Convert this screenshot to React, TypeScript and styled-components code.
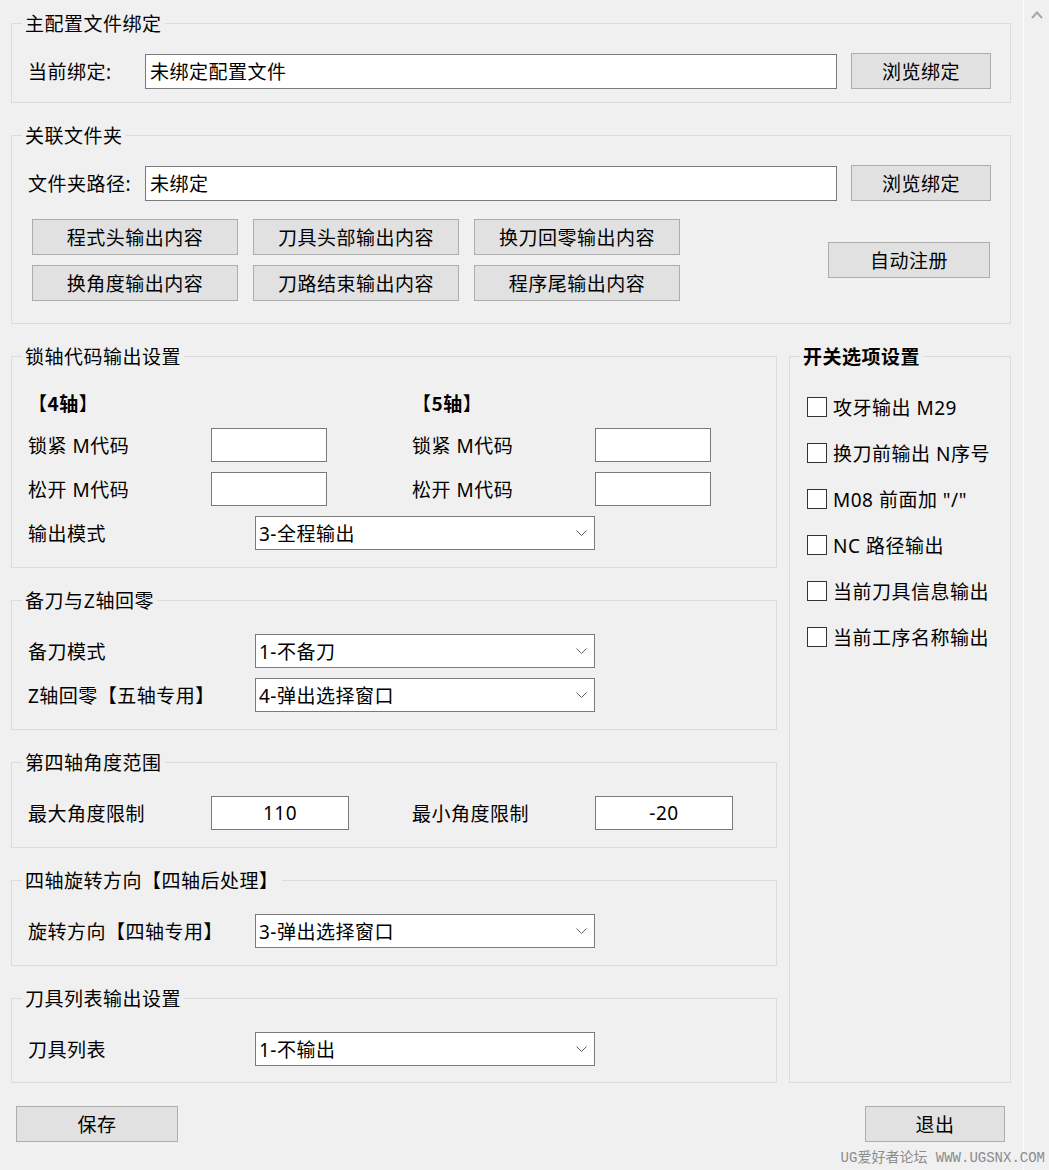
import styled, { createGlobalStyle } from "styled-components";

const GlobalStyle = createGlobalStyle`
  html, body {
    margin: 0;
    padding: 0;
    background: #f0f0f0;
  }
  body {
    font-family: "Noto Sans", "Noto Sans CJK SC", sans-serif;
    font-size: 19px;
    letter-spacing: 0.5px;
    color: #000;
  }
  * {
    box-sizing: border-box;
  }
`;

const lockRows = [
  { label: "锁紧 M代码" },
  { label: "松开 M代码" },
];

const switches = [
  "攻牙输出 M29",
  "换刀前输出 N序号",
  'M08 前面加 "/"',
  "NC 路径输出",
  "当前刀具信息输出",
  "当前工序名称输出",
];

const outputButtons = [
  "程式头输出内容",
  "刀具头部输出内容",
  "换刀回零输出内容",
  "换角度输出内容",
  "刀路结束输出内容",
  "程序尾输出内容",
];

const ChevronDown = () => (
  <svg width="11" height="6" viewBox="0 0 11 6">
    <polyline points="0.5,0.5 5.5,5.5 10.5,0.5" fill="none" stroke="#606060" strokeWidth="1" />
  </svg>
);

const ChevronUp = () => (
  <svg width="12" height="9" viewBox="0 0 12 9">
    <polyline points="1,8 6,2.5 11,8" fill="none" stroke="#a6a6a6" strokeWidth="2" />
  </svg>
);

const ComboBox = ({ value }: { value: string }) => (
  <Select>
    <span>{value}</span>
    <ChevronDown />
  </Select>
);

const App = () => {
  return (
    <Page>
      <GlobalStyle />
      <Main>
        <Group $pt={18} $pb={13}>
          <Legend>主配置文件绑定</Legend>
          <Row>
            <Label $w={117}>当前绑定:</Label>
            <TextBox $w={692} $h={35} defaultValue="未绑定配置文件" readOnly />
            <BrowseButton $w={140}>浏览绑定</BrowseButton>
          </Row>
        </Group>

        <Group $pt={18} $pb={22}>
          <Legend>关联文件夹</Legend>
          <Row>
            <Label $w={117}>文件夹路径:</Label>
            <TextBox $w={692} $h={35} defaultValue="未绑定" readOnly />
            <BrowseButton $w={140}>浏览绑定</BrowseButton>
          </Row>
          <ActionsRow>
            <ButtonGrid>
              {outputButtons.map((b) => (
                <Button key={b} $w={206}>
                  {b}
                </Button>
              ))}
            </ButtonGrid>
            <Button $w={162}>自动注册</Button>
          </ActionsRow>
        </Group>

        <Columns>
          <Stack>
            <Group $pt={20}>
              <Legend>锁轴代码输出设置</Legend>
              <AxisGrid>
                <AxisTitle>
                  【<b>4轴</b>】
                </AxisTitle>
                <AxisTitle>
                  【<b>5轴</b>】
                </AxisTitle>
                {lockRows.map((r) => (
                  <LockRow key={r.label}>
                    <span>{r.label}</span>
                    <TextBox $w={116} />
                    <span>{r.label}</span>
                    <TextBox $w={116} />
                  </LockRow>
                ))}
                <WideRow $h={34}>
                  <Label $w={227}>输出模式</Label>
                  <ComboBox value="3-全程输出" />
                </WideRow>
              </AxisGrid>
            </Group>

            <Group>
              <Legend>备刀与Z轴回零</Legend>
              <Rows>
                <Row $h={34}>
                  <Label $w={227}>备刀模式</Label>
                  <ComboBox value="1-不备刀" />
                </Row>
                <Row $h={34}>
                  <Label $w={227}>Z轴回零【五轴专用】</Label>
                  <ComboBox value="4-弹出选择窗口" />
                </Row>
              </Rows>
            </Group>

            <Group>
              <Legend>第四轴角度范围</Legend>
              <LockRow>
                <span>最大角度限制</span>
                <TextBox $w={138} $center defaultValue="110" />
                <span>最小角度限制</span>
                <TextBox $w={138} $center defaultValue="-20" />
              </LockRow>
            </Group>

            <Group>
              <Legend>四轴旋转方向【四轴后处理】</Legend>
              <Row $h={34}>
                <Label $w={227}>旋转方向【四轴专用】</Label>
                <ComboBox value="3-弹出选择窗口" />
              </Row>
            </Group>

            <Group $pb={16}>
              <Legend>刀具列表输出设置</Legend>
              <Row $h={34}>
                <Label $w={227}>刀具列表</Label>
                <ComboBox value="1-不输出" />
              </Row>
            </Group>
          </Stack>

          <Group $pt={27}>
            <Legend $bold>开关选项设置</Legend>
            <CheckList>
              {switches.map((s) => (
                <CheckItem key={s}>
                  <CheckBox />
                  <span>{s}</span>
                </CheckItem>
              ))}
            </CheckList>
          </Group>
        </Columns>

        <Footer>
          <Button $w={162}>保存</Button>
          <Button $w={140}>退出</Button>
        </Footer>
      </Main>
      <ScrollTrack>
        <ChevronUp />
      </ScrollTrack>
      <Watermark>UG爱好者论坛 WWW.UGSNX.COM</Watermark>
    </Page>
  );
};

const Page = styled.div`
  position: relative;
  display: flex;
  width: 1049px;
  height: 1170px;
  overflow: hidden;
`;
const Main = styled.div`
  width: 1023px;
  flex: none;
  display: flex;
  flex-direction: column;
  gap: 20px;
  padding: 11px 12px 0 11px;
`;
const Group = styled.fieldset<{ $pt?: number; $pb?: number }>`
  margin: 0;
  min-width: 0;
  border: 1px solid #dcdcdc;
  padding: ${(p) => p.$pt ?? 22}px 20px ${(p) => p.$pb ?? 17}px 16px;
`;
const Legend = styled.legend<{ $bold?: boolean }>`
  height: 24px;
  margin-left: -6px;
  padding: 0 3px;
  font-family: "Noto Sans CJK SC", sans-serif;
  line-height: 24px;
  font-weight: ${(p) => (p.$bold ? 700 : 400)};
`;
const Row = styled.div<{ $h?: number }>`
  display: flex;
  align-items: center;
  height: ${(p) => p.$h ?? 36}px;
`;
const Rows = styled.div`
  display: flex;
  flex-direction: column;
  gap: 10px;
`;
const Label = styled.span<{ $w: number }>`
  width: ${(p) => p.$w}px;
  flex: none;
  white-space: nowrap;
`;
const TextBox = styled.input<{ $w: number; $h?: number; $center?: boolean }>`
  width: ${(p) => p.$w}px;
  height: ${(p) => p.$h ?? 34}px;
  flex: none;
  border: 1px solid #7a7a7a;
  background: #fff;
  padding: 0 4px;
  font: inherit;
  letter-spacing: inherit;
  color: #000;
  text-align: ${(p) => (p.$center ? "center" : "left")};
  outline: none;
`;
const Button = styled.button<{ $w: number }>`
  width: ${(p) => p.$w}px;
  height: 36px;
  flex: none;
  padding: 0;
  background: #e1e1e1;
  border: 1px solid #adadad;
  font: inherit;
  letter-spacing: inherit;
  color: #000;
  cursor: pointer;
`;
const BrowseButton = styled(Button)`
  margin-left: 14px;
`;
const ActionsRow = styled.div`
  display: flex;
  justify-content: space-between;
  align-items: center;
  margin-top: 18px;
  padding-left: 4px;
`;
const ButtonGrid = styled.div`
  display: grid;
  grid-template-columns: repeat(3, 206px);
  column-gap: 15px;
  row-gap: 10px;
`;
const Columns = styled.div`
  display: grid;
  grid-template-columns: 766px 222px;
  column-gap: 12px;
`;
const Stack = styled.div`
  display: flex;
  flex-direction: column;
  gap: 20px;
`;
const AxisGrid = styled.div`
  display: grid;
  grid-template-columns: 384px 384px;
  row-gap: 10px;
`;
const AxisTitle = styled.div`
  height: 30px;
  font-family: "Noto Sans CJK SC", sans-serif;
  line-height: 30px;
  b {
    font-weight: 700;
  }
`;
const LockRow = styled.div`
  grid-column: 1 / -1;
  display: grid;
  grid-template-columns: 183px 201px 183px auto;
  align-items: center;
  height: 34px;
`;
const WideRow = styled(Row)`
  grid-column: 1 / -1;
`;
const Select = styled.div`
  width: 340px;
  height: 34px;
  flex: none;
  display: flex;
  align-items: center;
  justify-content: space-between;
  padding: 0 7px 0 3px;
  background: #fff;
  border: 1px solid #7a7a7a;
`;
const CheckList = styled.div`
  display: flex;
  flex-direction: column;
  gap: 22px;
`;
const CheckItem = styled.div`
  display: flex;
  align-items: center;
  gap: 6px;
  height: 24px;
  white-space: nowrap;
`;
const CheckBox = styled.span`
  width: 20px;
  height: 20px;
  flex: none;
  margin-left: 1px;
  background: #fff;
  border: 1px solid #333;
`;
const Footer = styled.div`
  display: flex;
  justify-content: space-between;
  margin-top: 3px;
  padding: 0 6px 0 5px;
`;
const ScrollTrack = styled.div`
  flex: 1;
  display: flex;
  justify-content: center;
  align-items: flex-start;
  padding-top: 10px;
  border-left: 1px solid #fbfbfb;
`;
const Watermark = styled.div`
  position: absolute;
  right: 4px;
  bottom: 4px;
  font-family: "Liberation Mono", "Noto Sans CJK SC", monospace;
  font-size: 14px;
  letter-spacing: 0;
  color: #8c8c8c;
  white-space: nowrap;
`;

export default App;
